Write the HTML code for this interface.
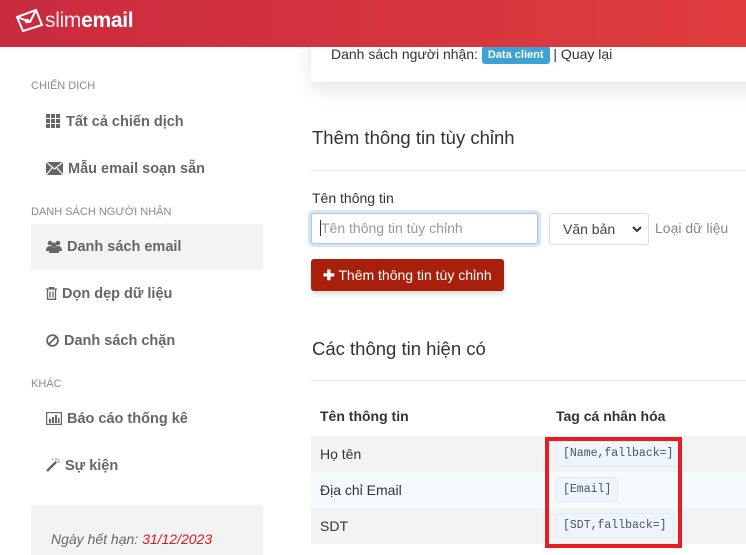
<!DOCTYPE html><html><head><meta charset="utf-8"><style>
body{margin:0;width:746px;height:555px;overflow:hidden;background:#fff;font-family:"Liberation Sans",sans-serif;position:relative}
.hdr{position:absolute;left:0;top:0;width:746px;height:47px;background:linear-gradient(90deg,#c92b3f,#e03c3e);z-index:2}
.logo{position:absolute;left:45px;top:9px;color:#fff;font-size:21px;letter-spacing:-0.3px}
.logo .s{font-weight:300;opacity:.9}.logo b{font-weight:bold}
.lbl{position:absolute;left:31px;font-size:11px;color:#8a8a8a}
.it{position:absolute;left:31px;width:232px;height:46px;font-size:14.5px;font-weight:bold;color:#666;line-height:46px;box-sizing:border-box;padding-left:15px}
.it svg{vertical-align:-2px;margin-right:5px}
.act{background:#f3f3f3}
.exp{position:absolute;left:31px;top:505px;width:232px;height:50px;background:#f3f3f3;font-style:italic;font-size:14px;color:#666;padding:26px 0 0 20px;box-sizing:border-box}
.card{position:absolute;left:311px;top:20px;width:460px;height:62px;background:#fff;box-shadow:0 8px 18px rgba(0,0,0,.1);border-radius:4px}
.card .t{position:absolute;left:20px;top:26px;font-size:14px;color:#333}
.badge{display:inline-block;background:#3aa3d3;color:#fff;font-size:11px;font-weight:bold;padding:3px 6px;border-radius:3px;vertical-align:1px}
.h{position:absolute;left:312px;font-size:18.5px;color:#333}
.hr{position:absolute;left:311px;width:435px;height:1px;background:#e6e6e6}
.in{position:absolute;left:311px;top:213px;width:227px;height:31px;border:1px solid #aac6e0;box-shadow:0 0 0 3px #d2e6f7;border-radius:3px;box-sizing:border-box;font-size:14px;color:#999;line-height:29px;padding-left:8px}
.sel{position:absolute;left:549px;top:213px;width:100px;height:32px;border:1px solid #ddd;border-radius:3px;box-sizing:border-box;font-size:14px;color:#444;line-height:30px;padding-left:13px}
.btn{position:absolute;left:311px;top:259px;width:193px;height:32px;background:#a81f0b;border-radius:3px;color:#fff;font-size:14px;line-height:32px;padding-left:12px;box-sizing:border-box;box-shadow:0 3px 6px rgba(0,0,0,.15)}
.row{position:absolute;left:311px;width:435px;height:36px;font-size:14px;color:#333;line-height:36px;box-sizing:border-box;padding-left:9px}
.tag{position:absolute;left:555px;font-family:"Liberation Mono",monospace;font-size:11.5px;color:#456;background:#eef5fd;border:1px solid #e3eaf3;border-radius:3px;padding:5px 6px 5px 7px}
</style></head><body>
<div class="hdr"><div class="logo"><svg width="30" height="24" viewBox="0 0 30 24" style="position:absolute;left:-30px;top:-1px"><g fill="none" stroke="#fff" stroke-width="2"><path d="M2 9 L21 2 L27 17 L8 23 Z"/><path d="M2 9 L15 14 L21 2"/></g><circle cx="12" cy="13" r="2.3" fill="#fff"/></svg><span class="s">slim</span><b>email</b></div></div>
<div class="lbl" style="top:80px">CHIẾN DỊCH</div>
<div class="it" style="top:99px"><svg width="15" height="14" viewBox="0 0 15 14" fill="#666"><rect x="0" y="0" width="4" height="4"/><rect x="5" y="0" width="4" height="4"/><rect x="10" y="0" width="4" height="4"/><rect x="0" y="5" width="4" height="4"/><rect x="5" y="5" width="4" height="4"/><rect x="10" y="5" width="4" height="4"/><rect x="0" y="10" width="4" height="4"/><rect x="5" y="10" width="4" height="4"/><rect x="10" y="10" width="4" height="4"/></svg>Tất cả chiến dịch</div>
<div class="it" style="top:146px"><svg width="17" height="13" viewBox="0 0 17 13"><rect width="17" height="13" fill="#666"/><path d="M0 0L8.5 7L17 0M0 13L6 6M17 13L11 6" stroke="#fff" stroke-width="1.2" fill="none"/></svg>Mẫu email soạn sẵn</div>
<div class="lbl" style="top:206px">DANH SÁCH NGƯỜI NHẬN</div>
<div class="it act" style="top:224px"><svg width="16" height="13" viewBox="0 0 16 13" fill="#666"><circle cx="4" cy="3" r="2.3"/><circle cx="12" cy="3" r="2.3"/><circle cx="8" cy="5" r="2.6"/><path d="M0 11Q0 6 4 6Q8 6 8 11ZM8 11Q8 6 12 6Q16 6 16 11Z"/><path d="M3 13Q3 8 8 8Q13 8 13 13Z"/></svg>Danh sách email</div>
<div class="it" style="top:271px"><svg width="11" height="13" viewBox="0 0 11 13" fill="none" stroke="#666" stroke-width="1.3"><path d="M0 2H11M3.5 2V0.7H7.5V2M1.5 2.5V12.3H9.5V2.5M4 4.5V10.5M7 4.5V10.5"/></svg>Dọn dẹp dữ liệu</div>
<div class="it" style="top:318px"><svg width="13" height="13" viewBox="0 0 13 13" fill="none" stroke="#666" stroke-width="1.8"><circle cx="6.5" cy="6.5" r="5.4"/><path d="M3 10L10 3"/></svg>Danh sách chặn</div>
<div class="lbl" style="top:378px">KHÁC</div>
<div class="it" style="top:396px"><svg width="16" height="13" viewBox="0 0 16 13"><rect x="0.6" y="0.6" width="14.8" height="11.8" fill="none" stroke="#666" stroke-width="1.2"/><g fill="#666"><rect x="3" y="7" width="2" height="4"/><rect x="6" y="5" width="2" height="6"/><rect x="9" y="3" width="2" height="8"/><rect x="12" y="6" width="1.5" height="5"/></g></svg>Báo cáo thống kê</div>
<div class="it" style="top:443px"><svg width="14" height="14" viewBox="0 0 14 14"><path d="M1 13L10 4" stroke="#666" stroke-width="2.4"/><path d="M10 0V3M12 1L13 2M14 4H11M6 1L7 2" stroke="#888" stroke-width="1"/></svg>Sự kiện</div>
<div class="exp">Ngày hết hạn: <span style="color:#e8141e">31/12/2023</span></div>
<div class="card"><div class="t">Danh sách người nhận: <span class="badge">Data client</span> | Quay lại</div></div>
<div class="h" style="top:127px">Thêm thông tin tùy chỉnh</div>
<div class="hr" style="top:170px"></div>
<div style="position:absolute;left:312px;top:190px;font-size:14px;color:#333">Tên thông tin</div>
<div class="in"><span style="border-left:1px solid #333;color:#999">Tên thông tin tùy chỉnh</span></div>
<div class="sel">Văn bản<svg width="10" height="7" viewBox="0 0 10 7" style="position:absolute;right:6px;top:12px"><path d="M1 1L5 5L9 1" stroke="#333" stroke-width="2" fill="none"/></svg></div>
<div style="position:absolute;left:655px;top:220px;font-size:14px;color:#888">Loại dữ liệu</div>
<div class="btn"><b>✚</b> Thêm thông tin tùy chỉnh</div>
<div class="h" style="top:338px">Các thông tin hiện có</div>
<div class="hr" style="top:380px"></div>
<div class="row" style="top:398px;font-weight:bold">Tên thông tin<span style="position:absolute;left:245px">Tag cá nhân hóa</span></div>
<div class="row" style="top:436px;background:#f3f3f3">Họ tên</div>
<div class="row" style="top:472px;background:#f5fbfd">Địa chỉ Email</div>
<div class="row" style="top:508px;background:#f3f3f3">SDT</div>
<div class="tag" style="top:441px">[Name,fallback=]</div>
<div class="tag" style="top:477px">[Email]</div>
<div class="tag" style="top:513px">[SDT,fallback=]</div>
<div style="position:absolute;left:545px;top:437px;width:137px;height:111px;border:4px solid #e81c24;box-sizing:border-box"></div>
</body></html>
